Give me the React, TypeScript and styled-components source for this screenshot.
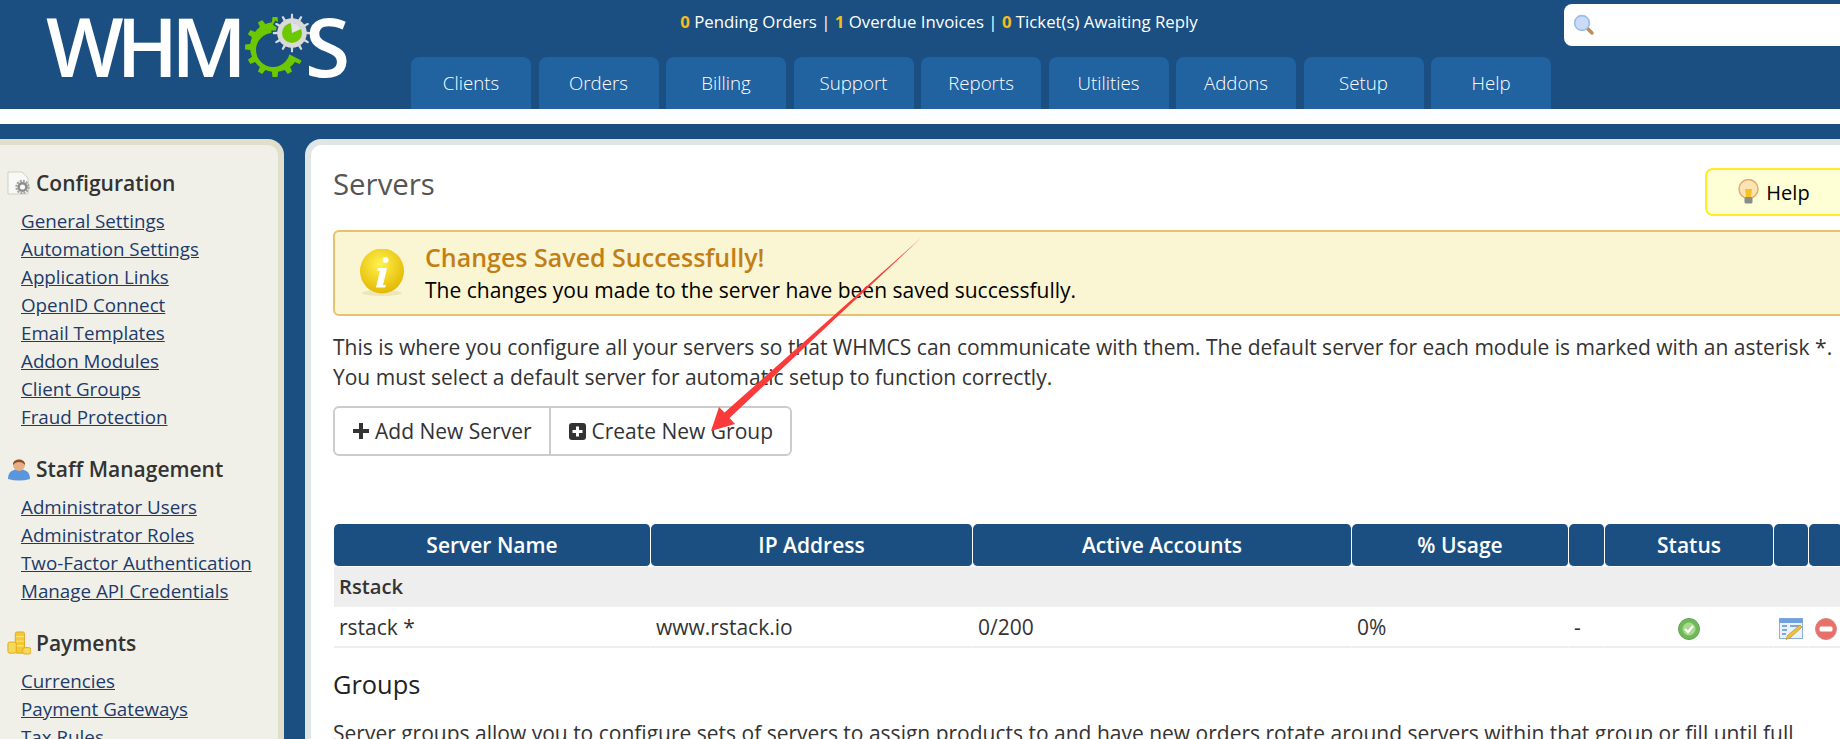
import styled, { createGlobalStyle } from "styled-components";

const GlobalStyle = createGlobalStyle`
  html, body {
    margin: 0;
    padding: 0;
    height: 739px;
    overflow: hidden;
    background: #1b4f82;
    font-family: "Open Sans", "Noto Sans", sans-serif;
  }
`;

const Page = styled.div`
  position: relative;
  width: 1840px;
  height: 739px;
  overflow: hidden;
`;

const Header = styled.header`
  display: flex;
  height: 109px;
  background: #1b4f82;
`;

const LogoBox = styled.div`
  position: relative;
  width: 411px;
  flex: none;
`;

const LogoText = styled.span<{ $left: number }>`
  position: absolute;
  top: 1px;
  left: ${(p) => p.$left}px;
  font-family: "Open Sans", sans-serif;
  font-size: 82px;
  font-weight: 600;
  line-height: 88px;
  letter-spacing: -7px;
  color: #fff;
`;

const LogoGear = styled.svg`
  position: absolute;
  left: 240px;
  top: 8px;
`;

const HeaderMiddle = styled.div`
  display: flex;
  flex-direction: column;
  width: 1153px;
  flex: none;
`;

const Stats = styled.div`
  height: 57px;
  padding: 10px 97px 0 0;
  box-sizing: border-box;
  line-height: 24px;
  font-size: 16.8px;
  color: #fff;
  text-align: center;
  b {
    font-weight: 700;
    color: #f5bb22;
  }
`;

const Tabs = styled.nav`
  display: flex;
  gap: 7.5px;
`;

const Tab = styled.a`
  display: block;
  width: 120px;
  height: 52px;
  line-height: 52px;
  background: #2162a1;
  border-radius: 8px 8px 0 0;
  font-size: 18.7px;
  font-weight: 300;
  color: #fff;
  text-align: center;
`;

const SearchBox = styled.div`
  display: flex;
  align-items: center;
  margin-top: 4px;
  padding-left: 9px;
  height: 42px;
  flex: 1;
  background: #fff;
  border-radius: 8px 0 0 8px;
`;

const WhiteBand = styled.div`
  height: 15px;
  background: #fff;
`;

const Body = styled.div`
  display: flex;
  padding-top: 15px;
  background: #1b4f82;
`;

const Sidebar = styled.aside`
  width: 278px;
  height: 600px;
  flex: none;
  padding-top: 20px;
  background: #f0f0e8;
  border-top: 6px solid #e0dfcc;
  border-right: 6px solid #e0dfcc;
  border-top-right-radius: 16px;
  box-sizing: content-box;
`;

const SideSection = styled.section`
  margin-bottom: 20px;
`;

const SideHeading = styled.h3`
  display: flex;
  align-items: center;
  gap: 5px;
  height: 36px;
  margin: 0 0 6px;
  padding-left: 7px;
  font-size: 21px;
  font-weight: 600;
  color: #333;
`;

const SideLink = styled.a`
  display: block;
  margin-left: 21px;
  height: 28px;
  line-height: 28px;
  font-size: 18.8px;
  color: #1d3a6b;
  text-decoration: underline;
`;

const Content = styled.main`
  flex: 1;
  height: 600px;
  margin-left: 21px;
  padding: 0 0 0 22px;
  background: #fff;
  border-top: 6px solid #e0e5e8;
  border-left: 6px solid #e0e5e8;
  border-top-left-radius: 16px;
  min-width: 0;
`;

const TitleRow = styled.div`
  display: flex;
  justify-content: space-between;
  height: 85px;
`;

const Title = styled.h1`
  margin: 16px 0 0;
  font-size: 29.4px;
  line-height: 46px;
  font-weight: 400;
  color: #555;
`;

const HelpButton = styled.div`
  display: flex;
  align-items: center;
  justify-content: center;
  gap: 6px;
  width: 135px;
  height: 48px;
  margin-top: 23px;
  box-sizing: border-box;
  background: #ffffd5;
  border: 2px solid #ffeb26;
  border-radius: 8px 0 0 8px;
  border-right: none;
  font-size: 20px;
  color: #000;
`;

const Alert = styled.div`
  display: flex;
  align-items: center;
  width: 1520px;
  height: 86px;
  box-sizing: border-box;
  padding-left: 24px;
  background: #faf5d2;
  border: 2px solid #e6c36a;
  border-radius: 6px;
`;

const AlertText = styled.div`
  margin: 2px 0 0 20px;
`;

const AlertTitle = styled.div`
  font-size: 25px;
  font-weight: 600;
  line-height: 32px;
  color: #c27f15;
`;

const AlertBody = styled.div`
  font-size: 21px;
  line-height: 34px;
  color: #000;
`;

const Paragraph = styled.p`
  margin: 16px 0 0;
  font-size: 21px;
  line-height: 30px;
  color: #333;
  white-space: nowrap;
`;

const ButtonGroup = styled.div`
  display: flex;
  width: fit-content;
  height: 50px;
  margin-top: 14px;
  box-sizing: border-box;
  border: 2px solid #ccc;
  border-radius: 6px;
`;

const GroupButton = styled.a`
  display: flex;
  align-items: center;
  gap: 6px;
  padding: 0 17px 0 18px;
  font-size: 21px;
  color: #333;
  & + & {
    border-left: 2px solid #ccc;
  }
`;

const ServerTable = styled.table`
  display: block;
  margin: 68px 0 0 1px;
  width: 1520px;
  border-collapse: separate;
  border-spacing: 0;
`;

const Col = styled.col<{ $width: number }>`
  width: ${(p) => p.$width}px;
`;

const HeadCell = styled.th`
  height: 43px;
  padding: 0;
  background: #1b4f82;
  border-radius: 5px;
  border-right: 1.5px solid #fff;
  border-bottom: 1px solid #fff;
  box-sizing: border-box;
  font-size: 21px;
  font-weight: 600;
  color: #fff;
  text-align: center;
`;

const GroupCell = styled.td`
  height: 40px;
  box-sizing: border-box;
  padding: 0 5px 2px;
  background: #eee;
  font-size: 20.2px;
  font-weight: 600;
  color: #333;
`;

const Cell = styled.td<{ $center?: boolean }>`
  height: 41px;
  padding: 0 5px;
  box-sizing: border-box;
  border-bottom: 2px solid #eee;
  border-right: 1.5px solid #fff;
  font-size: 21px;
  color: #333;
  text-align: ${(p) => (p.$center ? "center" : "left")};
  svg {
    display: inline-block;
    vertical-align: middle;
  }
`;

const SubHeading = styled.h2`
  margin: 18px 0 1px;
  font-size: 25.4px;
  line-height: 36px;
  font-weight: 400;
  color: #222;
`;

const ArrowOverlay = styled.svg`
  position: absolute;
  left: 0;
  top: 0;
  pointer-events: none;
`;

const SearchIcon = () => (
  <svg width="22" height="22" viewBox="0 0 22 22">
    <path d="M13.5 13.5 L19 19" stroke="#c08a50" strokeWidth="3.4" strokeLinecap="round" />
    <circle cx="9" cy="9" r="7.4" fill="#c9dcf5" stroke="#9dbbe6" strokeWidth="1.6" />
  </svg>
);

const BulbIcon = () => (
  <svg width="23" height="26" viewBox="0 0 23 26">
    <circle cx="11.5" cy="10" r="9.5" fill="#fbe3b4" stroke="#e3a86b" strokeWidth="1.4" />
    <path d="M8 10 h7 l-1 8 h-5z" fill="#f5c21f" />
    <rect x="7.5" y="18" width="8" height="6.5" rx="1.5" fill="#8b8b8b" />
  </svg>
);

const InfoIcon = () => (
  <svg width="46" height="48" viewBox="0 0 46 48">
    <defs>
      <radialGradient id="info" cx="45%" cy="35%" r="70%">
        <stop offset="0" stopColor="#fff34d" />
        <stop offset="1" stopColor="#e2b400" />
      </radialGradient>
    </defs>
    <ellipse cx="23" cy="44" rx="20" ry="3" fill="#ece6b8" />
    <ellipse cx="23" cy="22" rx="22" ry="22.5" fill="url(#info)" />
    <circle cx="26.5" cy="11" r="3" fill="#fff" />
    <path d="M19 19 h9 l-4 17 h3 l-1 2.5 h-9 l4 -17 h-3z" fill="#fff" />
  </svg>
);

const ConfigIcon = () => (
  <svg width="24" height="24" viewBox="0 0 24 24">
    <path d="M1 1 h14 l6 6 v16 H1z" fill="#f8f8f6" stroke="#cfcfca" />
    <circle cx="15.5" cy="16" r="6" fill="none" stroke="#a5a5a5" strokeWidth="2.4" strokeDasharray="2 1.1" />
    <circle cx="15.5" cy="16" r="3.8" fill="none" stroke="#8c8c8c" strokeWidth="2.4" />
  </svg>
);

const StaffIcon = () => (
  <svg width="24" height="24" viewBox="0 0 24 24">
    <path d="M1 22 C1 14 6 12.5 12 12.5 S23 14 23 22 Q12 25 1 22z" fill="#5a96dc" />
    <circle cx="12" cy="8" r="6" fill="#e6ae82" />
    <path d="M6 8 C5 1 19 1 18 8 C15 4 9 4 6 8z" fill="#8a4f2a" />
  </svg>
);

const CoinsIcon = () => (
  <svg width="24" height="24" viewBox="0 0 26 26">
    <rect x="9" y="1" width="10" height="23" rx="2" fill="#f3c832" stroke="#dda81f" />
    <path d="M10 6 h8 M10 11 h8 M10 16 h8" stroke="#fbe27a" strokeWidth="1.4" />
    <rect x="1" y="12" width="9" height="12" rx="2" fill="#f7d95a" stroke="#dda81f" />
    <rect x="17" y="18" width="9" height="7" rx="2.5" fill="#f7d95a" stroke="#dda81f" />
  </svg>
);

const PlusIcon = () => (
  <svg width="16" height="16" viewBox="0 0 16 16">
    <path d="M6 0 h4 v6 h6 v4 h-6 v6 h-4 v-6 h-6 v-4 h6z" fill="#333" />
  </svg>
);

const PlusSquareIcon = () => (
  <svg width="17" height="17" viewBox="0 0 17 17">
    <rect width="17" height="17" rx="3" fill="#333" />
    <path d="M7 3.5 h3 v3.5 h3.5 v3 h-3.5 v3.5 h-3 v-3.5 h-3.5 v-3 h3.5z" fill="#fff" />
  </svg>
);

const CheckIcon = () => (
  <svg width="22" height="22" viewBox="0 0 22 22">
    <circle cx="11" cy="11" r="10.5" fill="#6fb95a" stroke="#62a24f" />
    <circle cx="11" cy="11" r="6.5" fill="#a9d88f" />
    <path d="M7 11 l3 3 l5 -6" fill="none" stroke="#fff" strokeWidth="2.2" />
  </svg>
);

const EditIcon = () => (
  <svg width="24" height="22" viewBox="0 0 24 22">
    <rect x="0.5" y="0.5" width="23" height="20" fill="#eaf2fb" stroke="#8cb0de" />
    <rect x="0.5" y="0.5" width="23" height="4.5" fill="#6f9fdc" />
    <path d="M3 8 h5 M3 12 h5 M3 16 h4 M11 8 h9" stroke="#5d8fcf" strokeWidth="1.6" />
    <path d="M21 7 l2 2 l-12 11 l-4 1.5 l1.5 -4z" fill="#f0c040" stroke="#b98a2a" strokeWidth="0.7" />
  </svg>
);

const DeleteIcon = () => (
  <svg width="22" height="22" viewBox="0 0 22 22">
    <circle cx="11" cy="11" r="10.5" fill="#e8706a" stroke="#d98880" />
    <rect x="4.5" y="8.5" width="13" height="5" rx="1.5" fill="#fff" />
  </svg>
);

function gearPath(cx: number, cy: number, outer: number, inner: number, teeth: number) {
  const step = (Math.PI * 2) / teeth;
  let d = "";
  for (let i = 0; i < teeth; i++) {
    const a = i * step;
    const pts: [number, number][] = [
      [inner, a - step * 0.5],
      [inner, a - step * 0.24],
      [outer, a - step * 0.16],
      [outer, a + step * 0.16],
      [inner, a + step * 0.24],
    ];
    pts.forEach(([r, t], j) => {
      const x = (cx + r * Math.cos(t)).toFixed(1);
      const y = (cy + r * Math.sin(t)).toFixed(1);
      d += (i === 0 && j === 0 ? "M" : "L") + x + " " + y + " ";
    });
  }
  return d + "Z";
}

const Logo = () => (
  <LogoBox>
    <LogoText $left={46}>WHM</LogoText>
    <LogoGear width="76" height="74" viewBox="0 0 76 74">
      <path d={gearPath(35, 39, 30, 25, 12)} fill="#6cc900" />
      <circle cx="33" cy="42" r="17" fill="#1b4f82" />
      <path d="M35 39 L76 60 L76 0 L40 0z" fill="#1b4f82" />
      <path d={gearPath(52, 25, 20, 15.5, 12)} fill="#d9d9d9" stroke="#1b4f82" strokeWidth="1.5" />
      <circle cx="52" cy="25" r="10" fill="#6cc900" />
      <path d="M52 25 L51 15 A10 10 0 0 1 61 21z" fill="#e4e4e4" />
    </LogoGear>
    <LogoText $left={305}>S</LogoText>
  </LogoBox>
);

const tabs = ["Clients", "Orders", "Billing", "Support", "Reports", "Utilities", "Addons", "Setup", "Help"];

const sections = [
  {
    title: "Configuration",
    icon: <ConfigIcon />,
    links: [
      "General Settings",
      "Automation Settings",
      "Application Links",
      "OpenID Connect",
      "Email Templates",
      "Addon Modules",
      "Client Groups",
      "Fraud Protection",
    ],
  },
  {
    title: "Staff Management",
    icon: <StaffIcon />,
    links: ["Administrator Users", "Administrator Roles", "Two-Factor Authentication", "Manage API Credentials"],
  },
  {
    title: "Payments",
    icon: <CoinsIcon />,
    links: ["Currencies", "Payment Gateways", "Tax Rules"],
  },
];

const columns = [317, 322, 379, 217, 36, 169, 34, 34];
const headings = ["Server Name", "IP Address", "Active Accounts", "% Usage", "", "Status", "", ""];

export default function App() {
  return (
    <Page>
      <GlobalStyle />
      <Header>
        <Logo />
        <HeaderMiddle>
          <Stats>
            <b>0</b> Pending Orders | <b>1</b> Overdue Invoices | <b>0</b> Ticket(s) Awaiting Reply
          </Stats>
          <Tabs>
            {tabs.map((t) => (
              <Tab key={t}>{t}</Tab>
            ))}
          </Tabs>
        </HeaderMiddle>
        <SearchBox>
          <SearchIcon />
        </SearchBox>
      </Header>
      <WhiteBand />
      <Body>
        <Sidebar>
          {sections.map((s) => (
            <SideSection key={s.title}>
              <SideHeading>
                {s.icon}
                {s.title}
              </SideHeading>
              {s.links.map((l) => (
                <SideLink key={l}>{l}</SideLink>
              ))}
            </SideSection>
          ))}
        </Sidebar>
        <Content>
          <TitleRow>
            <Title>Servers</Title>
            <HelpButton>
              <BulbIcon />
              Help
            </HelpButton>
          </TitleRow>
          <Alert>
            <InfoIcon />
            <AlertText>
              <AlertTitle>Changes Saved Successfully!</AlertTitle>
              <AlertBody>The changes you made to the server have been saved successfully.</AlertBody>
            </AlertText>
          </Alert>
          <Paragraph>
            This is where you configure all your servers so that WHMCS can communicate with them. The default server for each module is marked with an asterisk *.
            <br />
            You must select a default server for automatic setup to function correctly.
          </Paragraph>
          <ButtonGroup>
            <GroupButton>
              <PlusIcon />
              Add New Server
            </GroupButton>
            <GroupButton>
              <PlusSquareIcon />
              Create New Group
            </GroupButton>
          </ButtonGroup>
          <ServerTable>
            <colgroup>
              {columns.map((w, i) => (
                <Col key={i} $width={w} />
              ))}
            </colgroup>
            <thead>
              <tr>
                {headings.map((h, i) => (
                  <HeadCell key={i}>{h}</HeadCell>
                ))}
              </tr>
            </thead>
            <tbody>
              <tr>
                <GroupCell colSpan={8}>Rstack</GroupCell>
              </tr>
              <tr>
                <Cell>rstack *</Cell>
                <Cell>www.rstack.io</Cell>
                <Cell>0/200</Cell>
                <Cell>0%</Cell>
                <Cell>-</Cell>
                <Cell $center>
                  <CheckIcon />
                </Cell>
                <Cell $center>
                  <EditIcon />
                </Cell>
                <Cell $center>
                  <DeleteIcon />
                </Cell>
              </tr>
            </tbody>
          </ServerTable>
          <SubHeading>Groups</SubHeading>
          <Paragraph>
            Server groups allow you to configure sets of servers to assign products to and have new orders rotate around servers within that group or fill until full
          </Paragraph>
        </Content>
      </Body>
      <ArrowOverlay width="1840" height="739" viewBox="0 0 1840 739">
        <path d="M921 238 L729.5 418 L735 424 L711 431 L719 407 L724.5 412.5z" fill="#fb3a3a" />
      </ArrowOverlay>
    </Page>
  );
}
